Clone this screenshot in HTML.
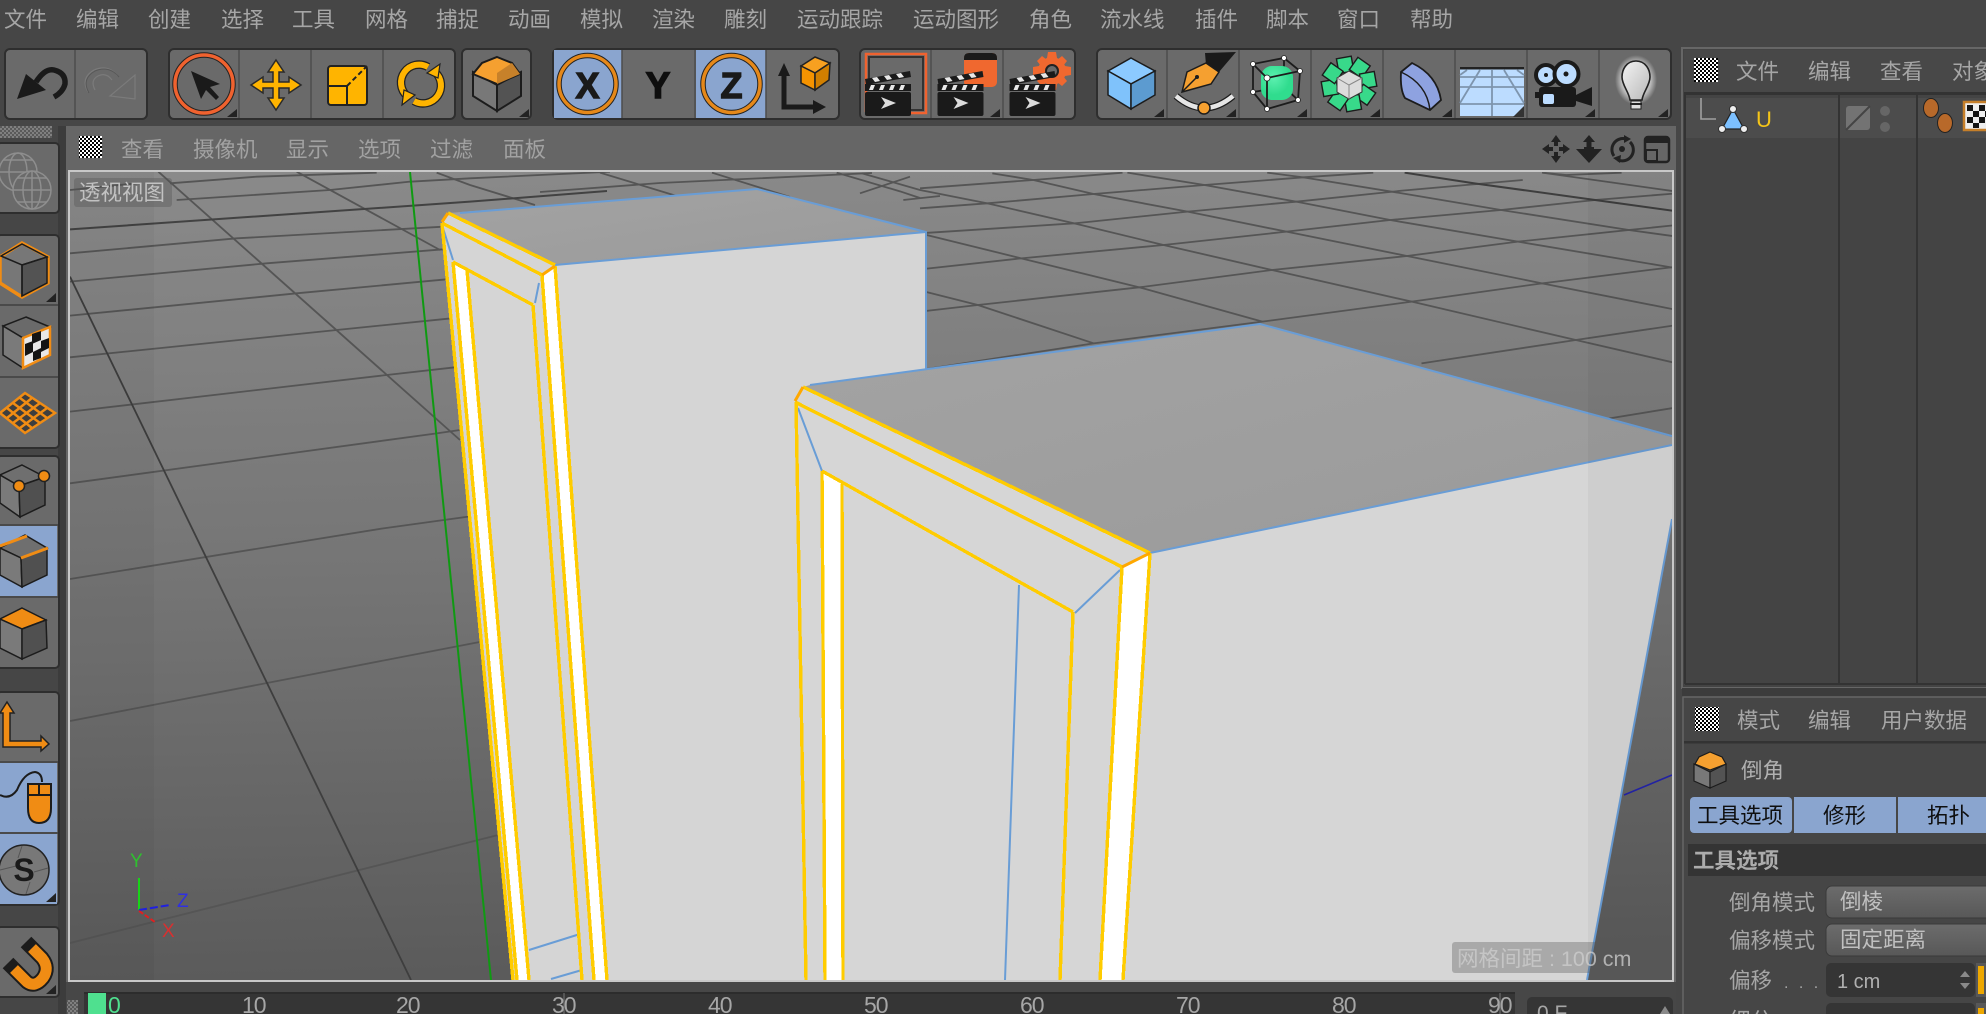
<!DOCTYPE html>
<html lang="zh"><head><meta charset="utf-8"><title>Cinema 4D</title>
<style>
html,body{margin:0;padding:0;background:#464646;width:1986px;height:1014px;overflow:hidden}
svg{display:block}
text{font-family:"Liberation Sans","Noto Sans CJK SC",sans-serif;font-size:21.5px;fill:#a6a6a6}
.vh text,text.vh{fill:#a2a2a2}
.k{fill:#1a1a1a}
</style></head><body>
<svg width="1986" height="1014" viewBox="0 0 1986 1014" xmlns="http://www.w3.org/2000/svg">
<defs>
<pattern id="gr" width="4" height="4" patternUnits="userSpaceOnUse"><rect width="4" height="4" fill="#000"/><rect width="2" height="2" fill="#fff"/><rect x="2" y="2" width="2" height="2" fill="#fff"/></pattern>
<pattern id="gd" width="4" height="4" patternUnits="userSpaceOnUse"><rect width="4" height="4" fill="#5a5a5a"/><rect width="2" height="2" fill="#808080"/><rect x="2" y="2" width="2" height="2" fill="#808080"/></pattern>
<linearGradient id="ground" x1="0" y1="0" x2="0.05" y2="1"><stop offset="0" stop-color="#8a8a8a"/><stop offset=".5" stop-color="#757575"/><stop offset="1" stop-color="#5b5b5b"/></linearGradient>
<linearGradient id="top" x1="0" y1="0" x2="1" y2="1"><stop offset="0" stop-color="#a3a3a3"/><stop offset="1" stop-color="#9a9a9a"/></linearGradient>
<linearGradient id="dd" x1="0" y1="0" x2="0" y2="1"><stop offset="0" stop-color="#6c6c6c"/><stop offset="1" stop-color="#585858"/></linearGradient>
<radialGradient id="glow"><stop offset=".7" stop-color="#fff" stop-opacity=".55"/><stop offset="1" stop-color="#fff" stop-opacity="0"/></radialGradient>
<linearGradient id="bulb" x1="0" y1="0" x2="1" y2="1"><stop offset="0" stop-color="#f4f4f4"/><stop offset="1" stop-color="#b8b8b8"/></linearGradient>
<radialGradient id="gb" cx=".4" cy=".35"><stop offset="0" stop-color="#5cf0b0"/><stop offset="1" stop-color="#30dc8e"/></radialGradient>
<clipPath id="vp"><rect x="70" y="172" width="1602" height="808"/></clipPath>
<g id="clap">
<rect x="0" y="92" width="46" height="24" rx="2" fill="#1a1a1a"/>
<rect x="0" y="84" width="46" height="7" fill="#1a1a1a"/>
<path d="M4 90l2-5h4l-2 5zM14 90l2-5h4l-2 5zM24 90l2-5h4l-2 5zM34 90l2-5h4l-2 5z" fill="#e8e8e8"/>
<polygon points="0,79 45,71 46,77 1,85" fill="#1a1a1a"/>
<path d="M7 78l5-1 3 4-5 1zM19 76l5-1 3 4-5 1zM31 74l5-1 3 4-5 1z" fill="#e8e8e8"/>
<polygon points="16,97 31,103 16,109 20,103" fill="#dcdcdc"/>
</g>
</defs>

<!-- base -->
<rect width="1986" height="1014" fill="#464646"/>

<!-- menu -->
<g>
<text x="4" y="27">文件</text><text x="76" y="27">编辑</text><text x="148" y="27">创建</text><text x="221" y="27">选择</text><text x="292" y="27">工具</text><text x="365" y="27">网格</text><text x="436" y="27">捕捉</text><text x="508" y="27">动画</text><text x="580" y="27">模拟</text><text x="652" y="27">渲染</text><text x="724" y="27">雕刻</text><text x="797" y="27">运动跟踪</text><text x="913" y="27">运动图形</text><text x="1029" y="27">角色</text><text x="1100" y="27">流水线</text><text x="1195" y="27">插件</text><text x="1266" y="27">脚本</text><text x="1337" y="27">窗口</text><text x="1410" y="27">帮助</text>
</g>

<!-- toolbar groups -->
<g fill="#6a6a6a" stroke="#2e2e2e" stroke-width="2">
<rect x="5" y="49" width="142" height="70" rx="5"/>
<rect x="169" y="49" width="286" height="70" rx="5"/>
<rect x="462" y="49" width="69" height="70" rx="5"/>
<rect x="553" y="49" width="286" height="70" rx="5"/>
<rect x="860" y="49" width="215" height="70" rx="5"/>
<rect x="1097" y="49" width="574" height="70" rx="5"/>
</g>
<rect x="554" y="50" width="68" height="68" fill="#8aa5cf"/>
<rect x="696" y="50" width="70" height="68" fill="#8aa5cf"/>
<g stroke="#4c4c4c" stroke-width="1.5">
<path d="M75 50v68M239 50v68M311 50v68M383 50v68M622 50v68M695 50v68M766 50v68M931 50v68M1003 50v68M1167 50v68M1239 50v68M1311 50v68M1383 50v68M1455 50v68M1527 50v68M1599 50v68"/>
</g>
<!-- undo -->
<path d="M36 82Q45 68 54 70Q66 73 65 84Q63 92 54 97" fill="none" stroke="#1a1a1a" stroke-width="5.5"/>
<polygon points="17,99 26,74 46,90" fill="#1a1a1a"/>
<!-- redo -->
<g fill="none" stroke="#7b7b7b" stroke-width="1.2"><path d="M88 92Q80 78 94 70Q108 64 118 76M95 90Q90 80 98 76Q106 72 112 80"/><polygon points="135,75 135,99 110,96"/></g>
<g fill="none" stroke="#585858" stroke-width="1"><path d="M89 93Q81 79 95 71Q109 65 119 77"/></g>
<!-- select -->
<ellipse cx="204" cy="84" rx="29" ry="29" fill="none" stroke="#222" stroke-width="5.5"/>
<ellipse cx="204" cy="84" rx="29" ry="29" fill="none" stroke="#f0622f" stroke-width="3.5"/>
<polygon points="191,71 201,99 206,90 216,100 219,97 210,87 220,84" fill="#1a1a1a"/>
<!-- move -->
<polygon points="276,60 284,72 279,72 279,82 289,82 289,77 301,85 289,93 289,88 279,88 279,98 284,98 276,110 268,98 273,98 273,88 263,88 263,93 251,85 263,77 263,82 273,82 273,72 268,72" fill="#ffb400" stroke="#2a2a2a" stroke-width="1.5"/>
<!-- scale -->
<rect x="328" y="66" width="39" height="39" rx="3" fill="#ffb400" stroke="#222" stroke-width="2"/>
<path d="M328 86h19v19" fill="none" stroke="#222" stroke-width="2"/>
<path d="M347 86L367 66" stroke="#222" stroke-width="2" stroke-dasharray="5 3"/>
<!-- rotate -->
<g fill="none" stroke-linecap="butt">
<path d="M407 96A18 18 0 0 1 428 67M435 72A18 18 0 0 1 414 101" stroke="#222" stroke-width="8.5"/>
<path d="M407 96A18 18 0 0 1 428 67M435 72A18 18 0 0 1 414 101" stroke="#ffb400" stroke-width="6"/>
</g>
<polygon points="427,73 440,64 438,78" fill="#ffb400" stroke="#222" stroke-width="1.2"/>
<polygon points="415,95 402,105 404,90" fill="#ffb400" stroke="#222" stroke-width="1.2"/>
<polygon points="227,117 237,117 237,109" fill="#222"/>
<!-- bevel cube -->
<polygon points="473,72 497,85 497,111 473,96" fill="#787878" stroke="#1c1c1c" stroke-width="2"/>
<polygon points="521,72 497,85 497,111 521,96" fill="#535353" stroke="#1c1c1c" stroke-width="2"/>
<polygon points="497,57 512,63 520,74 497,84 473,74 482,63" fill="#f5a030" stroke="#1c1c1c" stroke-width="2"/>
<polygon points="497,73 512,63 520,74 497,84" fill="#c7812a"/>
<!-- XYZ -->
<polygon points="519,117 529,117 529,109" fill="#222"/>
<ellipse cx="587.5" cy="84" rx="28.5" ry="28.5" fill="none" stroke="#222" stroke-width="5.5"/>
<ellipse cx="587.5" cy="84" rx="28.5" ry="28.5" fill="none" stroke="#e5881a" stroke-width="3.5"/>
<text x="587.5" y="98" text-anchor="middle" style="font-size:36px;font-weight:700;fill:#1a1a1a;stroke:#1a1a1a;stroke-width:1.4px">X</text>
<text x="658" y="98" text-anchor="middle" style="font-size:37px;font-weight:700;fill:#0e0e0e;stroke:#0e0e0e;stroke-width:1.4px">Y</text>
<ellipse cx="731.5" cy="84" rx="28.5" ry="28.5" fill="none" stroke="#222" stroke-width="5.5"/>
<ellipse cx="731.5" cy="84" rx="28.5" ry="28.5" fill="none" stroke="#e5881a" stroke-width="3.5"/>
<text x="731.5" y="98" text-anchor="middle" style="font-size:36px;font-weight:700;fill:#1a1a1a;stroke:#1a1a1a;stroke-width:1.4px">Z</text>
<!-- axis -->
<path d="M784 72V107H818" fill="none" stroke="#1a1a1a" stroke-width="5"/>
<polygon points="784,63 778,76 790,76" fill="#1a1a1a"/>
<polygon points="826,107 813,100 813,114" fill="#1a1a1a"/>
<polygon points="801,66 815,57 830,63 815,73" fill="#f7a020" stroke="#222" stroke-width="1.5"/>
<polygon points="801,66 815,73 815,90 801,83" fill="#f59300" stroke="#222" stroke-width="1.5"/>
<polygon points="830,63 815,73 815,90 829,80" fill="#d17f00" stroke="#222" stroke-width="1.5"/>
<!-- film icons -->
<path d="M866 112V54H926V113H911" fill="none" stroke="#f0622f" stroke-width="2.5"/>
<path d="M869 84V57H923V110H911" fill="none" stroke="#333" stroke-width="2"/>
<use href="#clap" x="865"/>
<rect x="964" y="53" width="33" height="34" rx="5" fill="#f0682f"/><path d="M964 60v-2q0-5 5-5h23q5 0 5 5v2z" fill="#1a1a1a"/>
<use href="#clap" x="937.5"/>
<polygon points="990,117 1000,117 1000,109" fill="#222"/>
<g transform="translate(1052,71)"><circle r="14" fill="#f0682f"/><path d="M-4-19h8l1 6h-10zM-4 19h8l1-6h-10zM-19-4v8l6 1v-10zM19-4v8l-6 1v-10zM-15-10l5-5 5 4-6 6zM15-10l-5-5-5 4 6 6zM-15 10l5 5 5-4-6-6zM15 10l-5 5-5-4 6-6z" fill="#f0682f"/><circle r="6" fill="#6a6a6a" stroke="#222" stroke-width="2"/></g>
<use href="#clap" x="1009.5"/>
<!-- blue cube -->
<polygon points="1131,58 1155,71 1131,84 1108,71" fill="#8ccaff" stroke="#1c1c1c" stroke-width="1.5"/>
<polygon points="1108,71 1131,84 1131,109 1108,95" fill="#7fc2fb" stroke="#1c1c1c" stroke-width="1.5"/>
<polygon points="1155,71 1131,84 1131,109 1155,95" fill="#5c9bd0" stroke="#1c1c1c" stroke-width="1.5"/>
<polygon points="1154,117 1164,117 1164,109" fill="#222"/>
<!-- pen -->
<path d="M1176 96Q1204 120 1233 96" fill="none" stroke="#1c1c1c" stroke-width="7"/>
<path d="M1176 96Q1204 120 1233 96" fill="none" stroke="#e6e6e6" stroke-width="4.5"/>
<circle cx="1204" cy="108" r="6" fill="#f5a030" stroke="#1c1c1c" stroke-width="1.5"/>
<polygon points="1205,53 1236,52 1219,72 1206,65" fill="#1a1a1a"/>
<polygon points="1182,92 1187,72 1206,63 1219,72 1211,84" fill="#f5a030" stroke="#1c1c1c" stroke-width="1.5"/>
<path d="M1183 91L1197 77" stroke="#1c1c1c" stroke-width="1.5"/><circle cx="1197" cy="77" r="2" fill="#1c1c1c"/>
<polygon points="1226,117 1236,117 1236,109" fill="#222"/>
<!-- green cube -->
<path d="M1253 64L1284 58L1300 71L1298 100L1267 109L1253 92ZM1253 92L1284 87L1298 100M1284 58V87" fill="none" stroke="#1c1c1c" stroke-width="1.8"/>
<rect x="1261" y="66" width="32" height="34" rx="11" fill="url(#gb)"/>
<path d="M1253 64L1267 78L1300 71M1267 78V109" fill="none" stroke="#1c1c1c" stroke-width="1.8"/>
<g fill="#fff" stroke="#222" stroke-width=".8"><circle cx="1253" cy="64" r="2.5"/><circle cx="1284" cy="58" r="2.5"/><circle cx="1300" cy="71" r="2.5"/><circle cx="1298" cy="100" r="2.5"/><circle cx="1267" cy="109" r="2.5"/><circle cx="1253" cy="92" r="2.5"/><circle cx="1267" cy="78" r="3"/></g>
<polygon points="1297,117 1307,117 1307,109" fill="#222"/>
<!-- cloner -->
<g fill="#38d98a" stroke="#1c1c1c" stroke-width="1.4">
<rect x="1341" y="57" width="15" height="15" transform="rotate(-10 1349 84)"/>
<rect x="1341" y="57" width="15" height="15" transform="rotate(35 1349 84)"/>
<rect x="1341" y="57" width="15" height="15" transform="rotate(80 1349 84)"/>
<rect x="1341" y="57" width="15" height="15" transform="rotate(125 1349 84)"/>
<rect x="1341" y="57" width="15" height="15" transform="rotate(170 1349 84)"/>
<rect x="1341" y="57" width="15" height="15" transform="rotate(215 1349 84)"/>
<rect x="1341" y="57" width="15" height="15" transform="rotate(260 1349 84)"/>
<rect x="1341" y="57" width="15" height="15" transform="rotate(305 1349 84)"/>
</g>
<polygon points="1349,71 1362,78 1362,92 1349,99 1337,92 1337,78" fill="#dcdcdc" stroke="#333" stroke-width="1"/>
<path d="M1337 78L1349 85L1362 78M1349 85V99" fill="none" stroke="#888" stroke-width="1"/>
<polygon points="1370,117 1380,117 1380,109" fill="#222"/>
<!-- bend -->
<path d="M1401 72L1412 63Q1437 75 1441 100L1430 110L1405 98Q1400 90 1401 72Z" fill="#8ea2e0" stroke="#1c1c1c" stroke-width="1.8"/>
<path d="M1401 72Q1427 84 1430 110" fill="none" stroke="#1c1c1c" stroke-width="1.5"/>
<polygon points="1442,117 1452,117 1452,109" fill="#222"/>
<!-- floor -->
<rect x="1460" y="68" width="64" height="48" fill="#bcdcff"/>
<rect x="1460" y="67" width="64" height="2.5" fill="#222"/>
<g stroke="#7e95ae" stroke-width="1.8" fill="none"><path d="M1460 77H1524M1460 87H1524M1460 104H1524M1492 70V116M1480 70L1460 103M1504 70L1524 103M1467 70L1460 75M1517 70L1524 75"/></g>
<polygon points="1513,117 1524,117 1524,106" fill="#333"/>
<!-- camera -->
<circle cx="1546" cy="75" r="10" fill="#bcdcff" stroke="#1a1a1a" stroke-width="4"/><circle cx="1546" cy="75" r="2" fill="#1a1a1a"/>
<circle cx="1566.5" cy="74" r="12" fill="#bcdcff" stroke="#1a1a1a" stroke-width="4"/><circle cx="1566" cy="74" r="2.5" fill="#1a1a1a"/>
<rect x="1539" y="87" width="37" height="20" rx="3" fill="#1a1a1a"/><rect x="1535" y="92" width="6" height="6" fill="#1a1a1a"/>
<polygon points="1576,95 1592,87 1592,106 1576,101" fill="#1a1a1a"/>
<rect x="1543" y="94" width="11" height="10" rx="2" fill="#bcdcff"/>
<polygon points="1585,117 1595,117 1595,109" fill="#222"/>
<!-- bulb -->
<ellipse cx="1636" cy="80" rx="21" ry="25" fill="url(#glow)"/>
<path d="M1636 61C1626 61 1622 70 1622 77C1622 85 1629 92 1630 100H1642C1643 92 1650 85 1650 77C1650 70 1646 61 1636 61Z" fill="url(#bulb)" stroke="#222" stroke-width="1.6"/>
<rect x="1631" y="101" width="10" height="8" fill="#ddd" stroke="#222"/>
<path d="M1630 104H1642" stroke="#222" stroke-width="2"/>
<polygon points="1658,117 1668,117 1668,109" fill="#222"/>

<!-- top-left grip -->
<rect x="0" y="126" width="52" height="12" fill="url(#gd)"/>
<!-- viewport header -->
<rect x="66" y="126" width="1610" height="860" fill="#666"/>
<rect x="79" y="136" width="23" height="22" fill="url(#gr)"/>
<g class="vh">
<text x="121" y="157">查看</text><text x="193" y="157">摄像机</text><text x="286" y="157">显示</text><text x="358" y="157">选项</text><text x="430" y="157">过滤</text><text x="503" y="157">面板</text>
</g>
<!-- view nav icons -->
<g fill="#222">
<path d="M1556 135l5 7h-3v4h-4v-4h-3zM1556 163l5-7h-3v-4h-4v4h-3zM1542 149l7-5v3h4v4h-4v3zM1570 149l-7-5v3h-4v4h4v3z"/>
<path d="M1589 135l6 7h-3.500v5h-5v-5h-3.500zM1576 149h8v-2h10v2h8l-13 14z"/>
</g>
<g fill="none" stroke="#222" stroke-width="3"><path d="M1614 156A11 11 0 0 1 1626 139M1630 142A11 11 0 0 1 1618 160"/></g>
<circle cx="1622" cy="149" r="3" fill="#222"/>
<polygon points="1624,135 1631,139 1624,143" fill="#222"/><polygon points="1620,163 1613,158 1621,155" fill="#222"/>
<rect x="1645" y="137" width="24" height="25" rx="3" fill="none" stroke="#222" stroke-width="2.5"/>
<rect x="1645" y="137" width="24" height="6" fill="#222"/>
<rect x="1646" y="150" width="11" height="11" fill="none" stroke="#222" stroke-width="2"/>

<!-- viewport -->
<rect x="68" y="170" width="1606" height="812" fill="#c8c8c8"/>
<g clip-path="url(#vp)">
<rect x="70" y="172" width="1602" height="808" fill="url(#ground)"/>
<!-- left grid -->
<g transform="translate(70,170) scale(.33333)" fill="none" stroke="#555" stroke-width="1.8">
<path vector-effect="non-scaling-stroke" d="M300 40L560 20L920 8"/>
<path vector-effect="non-scaling-stroke" d="M0 60L200 40M320 90L780 60L1020 35L1200 25L1620 5"/>
<path vector-effect="non-scaling-stroke" d="M0 250L500 205L1120 170"/>
<path vector-effect="non-scaling-stroke" d="M0 335L590 280L1120 238"/>
<path vector-effect="non-scaling-stroke" d="M0 437L680 370L1130 328"/>
<path vector-effect="non-scaling-stroke" d="M0 562L800 480L1145 445"/>
<path vector-effect="non-scaling-stroke" d="M0 725L950 615L1155 592"/>
<path vector-effect="non-scaling-stroke" d="M0 940L1100 790L1170 780"/>
<path vector-effect="non-scaling-stroke" d="M0 1227L940 1075L1195 1040"/>
<path vector-effect="non-scaling-stroke" d="M0 1653L1260 1410"/>
<path vector-effect="non-scaling-stroke" d="M0 2319L1320 1986"/>
<path vector-effect="non-scaling-stroke" d="M265 5L1170 810"/>
<path vector-effect="non-scaling-stroke" d="M680 5L1110 240"/>
<path vector-effect="non-scaling-stroke" d="M1100 8L1200 45L1395 105"/>
<path vector-effect="non-scaling-stroke" d="M1410 66L1770 39L2406 9"/>
<path vector-effect="non-scaling-stroke" d="M1590 8L1830 81"/>
<path vector-effect="non-scaling-stroke" d="M1926 8L2160 81"/>
<path vector-effect="non-scaling-stroke" d="M2370 70L2520 20"/>
<path vector-effect="non-scaling-stroke" d="M2300 8L2490 64L2550 84"/>
<path vector-effect="non-scaling-stroke" d="M2500 90L2610 78"/>
<path vector-effect="non-scaling-stroke" stroke="#424242" stroke-width="2" d="M0 178L1200 95L1611 63"/>
<path vector-effect="non-scaling-stroke" stroke="#3e3e3e" d="M0 320L1023 2430"/>
</g>
<!-- right grid -->
<g transform="translate(920,170) scale(.4822,.33333)" fill="none" stroke="#555" stroke-width="1.8">
<path vector-effect="non-scaling-stroke" d="M0 425L120 405L455 352L730 300L1010 258L1240 215L1470 180L1570 165"/>
<path vector-effect="non-scaling-stroke" d="M0 600L360 520L710 455L1020 395L1290 340L1540 295L1570 290"/>
<path vector-effect="non-scaling-stroke" d="M0 298L210 265L505 225L760 185L975 150L1205 120L1400 90L1570 70"/>
<path vector-effect="non-scaling-stroke" d="M0 190L320 160L555 125L780 95L1000 62L1250 30"/>
<path vector-effect="non-scaling-stroke" d="M0 115L140 100L360 72L590 45L795 22L940 8"/>
<path vector-effect="non-scaling-stroke" d="M0 55L235 30L420 8"/>
<path vector-effect="non-scaling-stroke" d="M1040 580L1360 510L1570 465"/>
<path vector-effect="non-scaling-stroke" d="M1430 745L1570 712"/>
<path vector-effect="non-scaling-stroke" d="M1290 8L1340 15L1455 8"/>
<path vector-effect="non-scaling-stroke" d="M10 365L120 405L360 520"/>
<path vector-effect="non-scaling-stroke" d="M0 190L210 265L455 352L710 455"/>
<path vector-effect="non-scaling-stroke" d="M-120 10L0 60L140 100L320 160L505 225L730 300L1020 395L1360 510L1570 580"/>
<path vector-effect="non-scaling-stroke" d="M150 10L235 30L360 72L555 125L760 185L1010 258L1290 340L1570 420"/>
<path vector-effect="non-scaling-stroke" d="M430 8L590 45L780 95L975 150L1240 215L1570 295"/>
<path vector-effect="non-scaling-stroke" d="M720 8L795 22L1000 70L1205 120L1470 180L1570 200"/>
<path vector-effect="non-scaling-stroke" d="M1290 8L1570 65"/>
<path vector-effect="non-scaling-stroke" stroke="#3e3e3e" stroke-width="2" d="M1005 8L1150 40L1400 90L1560 122"/>
</g>
<!-- green axis, blue axis -->
<path d="M410 172L491 980" stroke="#0f9a12" stroke-width="2"/>
<path d="M1624 795L1672 775" stroke="#2424a8" stroke-width="1.6"/>
<!-- box 1 -->
<polygon points="442,222 448,213 555,265 926,232 926,372 796,399 806,980 513,980" fill="#d5d5d5"/>
<polygon points="448,213 757,189 926,232 555,265" fill="url(#top)"/>
<!-- box 2 -->
<polygon points="803,387 810,385 1260,324 1672,437 1672,445 1150,553" fill="url(#top)"/>
<polygon points="803,387 1150,553 1672,445 1672,519 1587,980 806,980 796,402" fill="#d6d6d6"/>
<!-- white strips -->
<g fill="#fff">
<polygon points="455,264 467,270 529,980 517,980"/>
<polygon points="542,275 555,266 607,980 594,980"/>
<polygon points="822,471 842,484 843,980 825,980"/>
<polygon points="1122,567 1150,553 1123,980 1100,980"/>
</g>
<!-- blue edges -->
<g fill="none" stroke="#699dd6" stroke-width="2">
<path d="M460 213L757 189L926 232V370"/>
<path d="M555 265L926 232"/>
<path d="M810 385L1260 324L1672 436"/>
<path d="M1150 553L1672 445"/>
<path d="M1672 519L1587 980"/>
<path d="M798 408L822 471M1120 570L1075 613M1019 585L1005 980M443 228L453 260M539 283L535 303M529 950L580 934M551 979L582 970"/>
</g>
<!-- yellow -->
<g fill="none" stroke="#ffcc00" stroke-width="3.400" shape-rendering="crispEdges">
<path d="M448 213L555 265M442 223L542 275M453 262L533 305"/>
<path d="M442 223L513 980M453 262L517 980M467 270L529 980M542 275L594 980M555 266L607 980M533 305L582 980"/>
<path d="M803 387L1150 553M795 402L1122 567M822 471L1073 612"/>
<path d="M796 402L806 980M822 471L825 980M842 484L843 980M1122 567L1100 980M1150 553L1123 980M1073 612L1060 980"/>
</g>
<g fill="none" stroke="#ffa800" stroke-width="3"><path d="M442 222L448 213M542 275L555 266M795 401L803 387M1122 567L1150 553"/></g>
<!-- safe-frame bands -->
<rect x="70" y="172" width="84" height="808" fill="#000" opacity=".035"/>
<rect x="1588" y="172" width="84" height="808" fill="#000" opacity=".035"/>
</g>
<!-- viewport overlays -->
<rect x="74" y="178" width="98" height="29" rx="3" fill="#555" opacity=".38"/>
<text x="79" y="200" style="fill:#c2c2c2">透视视图</text>
<rect x="1452" y="942" width="214" height="31" rx="3" fill="#5a5a5a" opacity=".36"/>
<text x="1457" y="966" style="fill:#cfcfcf;opacity:.75">网格间距 : 100 cm</text>
<!-- gizmo -->
<path d="M139 878V910" stroke="#18d418" stroke-width="2"/>
<path d="M139 910L170 905" stroke="#2020e0" stroke-width="2" stroke-dasharray="8 3"/>
<path d="M139 911L155 922" stroke="#e02020" stroke-width="2" stroke-dasharray="5 2"/>
<text x="130" y="867" style="font-size:19px;fill:#2fc02f">Y</text>
<text x="177" y="907" style="font-size:19px;fill:#3030e0">Z</text>
<text x="162" y="937" style="font-size:19px;fill:#d83030">X</text>

<!-- left column -->
<rect x="58" y="126" width="8" height="888" fill="#3c3c3c"/>
<rect x="-3" y="143" width="62" height="70" rx="4" fill="#6a6a6a" stroke="#2e2e2e" stroke-width="2"/>
<g fill="none" stroke="#8e8e8e" stroke-width="1.5">
<circle cx="18" cy="172" r="19"/><ellipse cx="18" cy="172" rx="9" ry="19"/><path d="M-1 172H37M3 160H33"/>
<circle cx="32" cy="190" r="19" fill="#6a6a6a"/><ellipse cx="32" cy="190" rx="9" ry="19"/><path d="M13 190H51M17 178H47M17 202H47M32 171V209"/>
</g>
<g fill="#6a6a6a" stroke="#2e2e2e" stroke-width="2">
<rect x="-3" y="235" width="62" height="213" rx="4"/>
<rect x="-3" y="456" width="62" height="212" rx="4"/>
<rect x="-3" y="692" width="62" height="213" rx="4"/>
<rect x="-3" y="927" width="62" height="70" rx="4"/>
</g>
<rect x="0" y="526" width="57" height="70" fill="#8aa5cf"/>
<rect x="0" y="763" width="57" height="70" fill="#8aa5cf"/>
<rect x="0" y="834" width="57" height="70" fill="#8aa5cf"/>
<path d="M0 305H58M0 377H58M0 525H58M0 597H58M0 762H58M0 833H58" stroke="#4a4a4a" stroke-width="2"/>
<!-- cube 1 -->
<polygon points="22,243 48,257 48,283 22,297 0,283 0,257" fill="#777" stroke="#f08c14" stroke-width="3.500"/>
<polygon points="22,265 47,257 47,283 22,296" fill="#535353" stroke="#1c1c1c" stroke-width="1.5"/>
<path d="M1 256L22 265L47 257L22 244ZM22 265V296" fill="none" stroke="#1c1c1c" stroke-width="1.5"/>
<polygon points="46,302 56,302 56,293" fill="#222"/>
<!-- cube 2 -->
<polygon points="26,317 50,327 23,338 3,326" fill="#6a6a6a" stroke="#1c1c1c" stroke-width="1.5"/>
<polygon points="3,326 23,338 23,368 3,355" fill="#7a7a7a" stroke="#1c1c1c" stroke-width="1.5"/>
<polygon points="23,338 50,327 50,355 23,368" fill="#e8e8e8" stroke="#f08c14" stroke-width="2.500"/>
<path d="M32 334l9-3v9l-9 4zM25 344l8-3v11l-8 4zM41 341l8-3v10l-8 4zM33 352l8-4v10l-8 3z" fill="#141414"/>
<!-- plane -->
<polygon points="0,413 25,393 55,413 25,433" fill="#3e3e3e" stroke="#f08c14" stroke-width="2.500"/>
<g stroke="#f08c14" stroke-width="2.500"><path d="M7 408L32 428M13 403L40 423M20 398L47 418M7 418L32 398M13 423L40 403M20 428L47 408"/></g>
<!-- cube dots -->
<polygon points="22,465 45,477 19,486 0,475" fill="#6f6f6f" stroke="#1c1c1c" stroke-width="1.5"/>
<polygon points="0,475 19,486 20,517 0,503" fill="#7a7a7a" stroke="#1c1c1c" stroke-width="1.5"/>
<polygon points="45,477 19,486 20,517 45,505" fill="#505050" stroke="#1c1c1c" stroke-width="1.5"/>
<circle cx="19" cy="486" r="5.500" fill="#f08c14" stroke="#222" stroke-width="1.5"/><circle cx="44" cy="476" r="5.500" fill="#f08c14" stroke="#222" stroke-width="1.5"/>
<!-- cube edge -->
<polygon points="25,535 47,548 21,558 0,548" fill="#6f6f6f" stroke="#1c1c1c" stroke-width="1.5"/>
<polygon points="0,548 21,558 22,587 0,575" fill="#7a7a7a" stroke="#1c1c1c" stroke-width="1.5"/>
<polygon points="47,548 21,558 22,587 47,575" fill="#505050" stroke="#1c1c1c" stroke-width="1.5"/>
<path d="M0 546L27 536M21 558L48 548" stroke="#f08c14" stroke-width="3"/>
<!-- cube poly -->
<polygon points="22,608 46,620 22,629 0,619" fill="#f08c14" stroke="#1c1c1c" stroke-width="1.5"/>
<polygon points="0,619 22,629 22,659 0,648" fill="#7a7a7a" stroke="#1c1c1c" stroke-width="1.5"/>
<polygon points="46,620 22,629 22,659 47,648" fill="#505050" stroke="#1c1c1c" stroke-width="1.5"/>
<!-- L arrow -->
<polygon points="7,702 14,713 10,713 10,741 41,741 41,736 49,744 41,751 41,747 3,747 3,713 0,713" fill="#f08c14" stroke="#222" stroke-width="1.5"/>
<!-- mouse -->
<path d="M0 795Q10 800 17 790Q24 773 35 772Q42 773 42 782" fill="none" stroke="#1c1c1c" stroke-width="2"/>
<path d="M28 784H51V808Q51 823 39 823Q28 823 28 808Z" fill="#f08c14" stroke="#1c1c1c" stroke-width="2"/>
<path d="M28 795H51M39 784V795" stroke="#1c1c1c" stroke-width="2"/>
<!-- S -->
<circle cx="24" cy="870" r="25" fill="#787878" stroke="#222" stroke-width="1.5"/>
<path d="M0 870L16 866M48 868L34 872M22 846L18 858M26 894L30 882" stroke="#555" stroke-width="1"/>
<text x="24" y="881" text-anchor="middle" style="font-size:32px;font-weight:700;fill:#1a1a1a">S</text>
<polygon points="46,902 56,902 56,893" fill="#222"/>
<!-- magnet -->
<path d="M8 963L27 982Q35 988 43 978Q50 968 42 958L26 942" fill="none" stroke="#1c1c1c" stroke-width="15"/>
<path d="M14 969L27 982Q35 988 43 978Q50 968 42 958L32 948" fill="none" stroke="#f08c14" stroke-width="11"/>
<polygon points="46,994 56,994 56,985" fill="#222"/>

<!-- bottom area -->
<rect x="66" y="982" width="1610" height="32" fill="#474747"/>
<rect x="67" y="1000" width="11" height="14" fill="url(#gd)"/>
<rect x="84" y="993" width="1431" height="21" fill="#353535"/>
<rect x="84" y="992" width="1431" height="2" fill="#2c2c2c"/>
<rect x="88" y="993" width="18" height="21" fill="#4fe08f"/>
<text x="108" y="1013" style="fill:#4fe08f;font-size:23px;letter-spacing:-1px">0</text>
<g>
<text x="242" y="1013" style="font-size:23px;letter-spacing:-1px">10</text><text x="396" y="1013" style="font-size:23px;letter-spacing:-1px">20</text><text x="552" y="1013" style="font-size:23px;letter-spacing:-1px">30</text><text x="708" y="1013" style="font-size:23px;letter-spacing:-1px">40</text><text x="864" y="1013" style="font-size:23px;letter-spacing:-1px">50</text><text x="1020" y="1013" style="font-size:23px;letter-spacing:-1px">60</text><text x="1176" y="1013" style="font-size:23px;letter-spacing:-1px">70</text><text x="1332" y="1013" style="font-size:23px;letter-spacing:-1px">80</text><text x="1488" y="1013" style="font-size:23px;letter-spacing:-1px">90</text>
</g>
<path d="M564 993V1014M1500 993V1014" stroke="#777" stroke-width="1"/>
<rect x="1527" y="997" width="146" height="24" rx="5" fill="#353535"/>
<text x="1537" y="1020" style="font-size:21px">0 F</text>
<polygon points="1665,1006 1670,1014 1660,1014" fill="#8a8a8a"/>

<!-- right panel object manager -->
<rect x="1682" y="48" width="306" height="640" fill="#444" stroke="#666" stroke-width="2"/>
<rect x="1684" y="50" width="302" height="42" fill="#484848"/>
<rect x="1684" y="92" width="302" height="3" fill="#333"/>
<rect x="1694" y="58" width="24" height="24" fill="url(#gr)"/>
<text x="1736" y="79">文件</text><text x="1808" y="79">编辑</text><text x="1880" y="79">查看</text><text x="1952" y="79">对象</text>
<rect x="1686" y="98" width="300" height="40" fill="#4c4c4c"/>
<path d="M1685 95V684M1839 95V684M1917 95V684M1685 684H1986" stroke="#333" stroke-width="2" fill="none"/>
<path d="M1701 98V119H1716" fill="none" stroke="#a0a0a0" stroke-width="1.6"/>
<polygon points="1733,109 1722,129 1744,129" fill="#7cc0ff" stroke="#222" stroke-width="1.2"/>
<g fill="#eee" stroke="#333" stroke-width="1"><circle cx="1733" cy="109" r="3.500"/><circle cx="1722" cy="129" r="3.500"/><circle cx="1744" cy="129" r="3.500"/></g>
<text x="1756" y="127" style="fill:#f5c518;font-size:22px">U</text>
<rect x="1846" y="106" width="24" height="24" rx="3" fill="#737373"/>
<path d="M1846 130L1870 106" stroke="#444" stroke-width="2"/>
<circle cx="1885" cy="111" r="5" fill="#666"/><circle cx="1885" cy="127" r="5" fill="#666"/>
<ellipse cx="1931" cy="108" rx="7.500" ry="9.500" fill="#b8692a" stroke="#222" stroke-width="1"/>
<ellipse cx="1945" cy="123" rx="7.500" ry="9.500" fill="#b8692a" stroke="#222" stroke-width="1"/>
<rect x="1964" y="102" width="24" height="28" fill="#eee" stroke="#c57f2a" stroke-width="2.500"/>
<path d="M1967 105h6v6h-6zM1979 105h6v6h-6zM1973 111h6v6h-6zM1985 111h2v6h-2zM1967 117h6v6h-6zM1979 117h6v6h-6zM1973 123h6v5h-6z" fill="#141414"/>

<!-- attr panel -->
<rect x="1682" y="688" width="304" height="9" fill="#3c3c3c"/>
<rect x="1683" y="697" width="305" height="319" fill="#464646" stroke="#666" stroke-width="1.5"/>
<rect x="1684" y="741" width="302" height="2.500" fill="#333"/>
<rect x="1695" y="707" width="24" height="24" fill="url(#gr)"/>
<text x="1737" y="728">模式</text><text x="1808" y="728">编辑</text><text x="1881" y="728">用户数据</text>
<!-- bevel icon small -->
<polygon points="1694,764 1710,772 1710,788 1694,781" fill="#787878" stroke="#1c1c1c" stroke-width="1.2"/>
<polygon points="1726,764 1710,772 1710,788 1726,781" fill="#535353" stroke="#1c1c1c" stroke-width="1.2"/>
<polygon points="1710,752 1722,757 1726,764 1710,770 1695,764 1699,757" fill="#f5a030" stroke="#1c1c1c" stroke-width="1.2"/>
<text x="1741" y="778" style="fill:#b0b0b0">倒角</text>
<!-- tabs -->
<rect x="1690" y="797" width="102" height="36" rx="4" fill="#8aa5cf"/>
<rect x="1794" y="797" width="102" height="36" fill="#8aa5cf"/>
<rect x="1898" y="797" width="88" height="36" fill="#8aa5cf"/>
<text x="1697" y="823" style="fill:#0e0e0e">工具选项</text><text x="1823" y="823" style="fill:#0e0e0e">修形</text><text x="1927" y="823" style="fill:#0e0e0e">拓扑</text>
<rect x="1688" y="844" width="298" height="32" fill="#343434"/>
<text x="1693" y="868" style="font-weight:700;fill:#acacac">工具选项</text>
<text x="1729" y="910">倒角模式</text>
<rect x="1826" y="886" width="200" height="32" rx="6" fill="url(#dd)" stroke="#3a3a3a"/>
<text x="1840" y="909" style="fill:#c0c0c0">倒棱</text>
<text x="1729" y="948">偏移模式</text>
<rect x="1826" y="924" width="200" height="32" rx="6" fill="url(#dd)" stroke="#3a3a3a"/>
<text x="1840" y="947" style="fill:#c0c0c0">固定距离</text>
<text x="1729" y="988">偏移</text><text x="1784" y="988" style="font-size:16px;letter-spacing:3px">. . .</text>
<rect x="1826" y="963" width="149" height="34" rx="5" fill="#353535"/>
<text x="1837" y="988" style="font-size:20px;fill:#b0b0b0">1 cm</text>
<polygon points="1965,971 1970,977 1960,977" fill="#8a8a8a"/><polygon points="1965,989 1970,983 1960,983" fill="#8a8a8a"/>
<rect x="1976" y="963" width="10" height="34" fill="#585858"/><rect x="1978" y="966" width="6" height="28" fill="#eea800"/>
<rect x="1826" y="1003" width="149" height="20" rx="5" fill="#353535"/>
<text x="1729" y="1028">细分</text>
<rect x="1976" y="1003" width="10" height="11" fill="#585858"/><rect x="1978" y="1008" width="6" height="6" fill="#eea800"/>
</svg>
</body></html>
